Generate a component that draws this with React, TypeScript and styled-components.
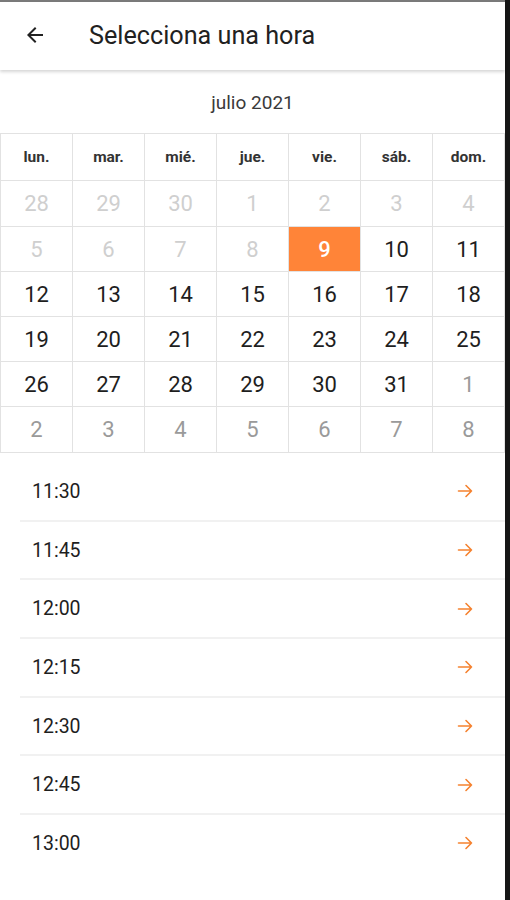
import React from "react";
import styled, { createGlobalStyle } from "styled-components";

const Global = createGlobalStyle`
  html, body { margin: 0; padding: 0; background: #ffffff; }
  body { font-family: Roboto, "Noto Sans", Arial, sans-serif; -webkit-font-smoothing: antialiased; }
`;

const Frame = styled.div`
  display: flex;
  width: 510px;
  height: 900px;
  overflow: hidden;
  background: #ffffff;
`;

const Screen = styled.div`
  width: 505px;
  display: flex;
  flex-direction: column;
  border-top: 2px solid #7a7a7a;
  box-sizing: border-box;
`;

const EdgeBar = styled.div`
  width: 5px;
  background: #161616;
`;

const Header = styled.header`
  height: 68px;
  display: flex;
  align-items: center;
  padding-left: 23px;
  padding-bottom: 2px;
  box-sizing: border-box;
  box-shadow: 0 2px 3px rgba(0, 0, 0, 0.16);
  position: relative;
  z-index: 1;
  background: #fff;
`;

const BackButton = styled.button`
  width: 24px;
  height: 24px;
  padding: 0;
  border: none;
  background: none;
  display: flex;
  color: #212121;
`;

const Title = styled.h1`
  margin: 0 0 0 42px;
  font-size: 25.2px;
  font-weight: 400;
  color: #212121;
`;

const MonthLabel = styled.div`
  height: 63px;
  display: flex;
  align-items: center;
  justify-content: center;
  font-size: 19px;
  color: #3a3a3a;
  padding-top: 2px;
  box-sizing: border-box;
`;

const Grid = styled.div`
  display: grid;
  grid-template-columns: repeat(7, 71px);
  grid-template-rows: 46px 45px 44px 44px 44px 44px 45px;
  gap: 1px;
  padding: 1px;
  background: #e2e2e2;
  width: 505px;
  box-sizing: border-box;
`;

const WeekDay = styled.div`
  background: #fff;
  display: flex;
  align-items: center;
  justify-content: center;
  font-size: 15.5px;
  font-weight: 700;
  color: #333;
`;

type Tone = "muted" | "other" | "normal" | "selected";

const toneColor: Record<Tone, string> = {
  muted: "#cfcfcf",
  other: "#9a9a9a",
  normal: "#1e1e1e",
  selected: "#ffffff",
};

const Day = styled.div<{ $tone: Tone }>`
  background: ${(p) => (p.$tone === "selected" ? "#ff8438" : "#fff")};
  color: ${(p) => toneColor[p.$tone]};
  font-weight: ${(p) => (p.$tone === "selected" ? 500 : 400)};
  display: flex;
  align-items: center;
  justify-content: center;
  font-size: 22px;
`;

const TimeList = styled.ul`
  list-style: none;
  margin: 0;
  padding: 10px 0 0 20px;
`;

const TimeRow = styled.li`
  height: 56.7px;
  display: flex;
  align-items: center;
  justify-content: space-between;
  padding: 0 32px 0 12px;
  border-bottom: 2px solid #f1f1f1;
  font-size: 19.5px;
  color: #1e1e1e;
  &:last-child { border-bottom-color: transparent; }
`;

const ArrowIcon = styled.svg`
  width: 16px;
  height: 14px;
  color: #f5822f;
`;

const weekDays = ["lun.", "mar.", "mié.", "jue.", "vie.", "sáb.", "dom."];

const days: { n: number; tone: Tone }[] = [
  ...[28, 29, 30, 1, 2, 3, 4, 5, 6, 7, 8].map((n) => ({ n, tone: "muted" as Tone })),
  { n: 9, tone: "selected" },
  ...Array.from({ length: 22 }, (_, i) => ({ n: 10 + i, tone: "normal" as Tone })),
  ...[1, 2, 3, 4, 5, 6, 7, 8].map((n) => ({ n, tone: "other" as Tone })),
];

const times = ["11:30", "11:45", "12:00", "12:15", "12:30", "12:45", "13:00"];

export default function App() {
  return (
    <Frame>
      <Global />
      <Screen>
        <Header>
          <BackButton aria-label="Atrás">
            <svg width="24" height="24" viewBox="0 0 24 24" fill="currentColor">
              <path d="M20 11H7.83l5.59-5.59L12 4l-8 8 8 8 1.41-1.41L7.83 13H20v-2z" />
            </svg>
          </BackButton>
          <Title>Selecciona una hora</Title>
        </Header>
        <MonthLabel>julio 2021</MonthLabel>
        <Grid>
          {weekDays.map((d) => (
            <WeekDay key={d}>{d}</WeekDay>
          ))}
          {days.map((d, i) => (
            <Day key={i} $tone={d.tone}>
              {d.n}
            </Day>
          ))}
        </Grid>
        <TimeList>
          {times.map((t) => (
            <TimeRow key={t}>
              <span>{t}</span>
              <ArrowIcon viewBox="0 0 16 14" fill="none" stroke="currentColor" strokeWidth="1.6" strokeLinecap="round" strokeLinejoin="round">
                <path d="M1.5 7h13M9 1.5L14.5 7 9 12.5" />
              </ArrowIcon>
            </TimeRow>
          ))}
        </TimeList>
      </Screen>
      <EdgeBar />
    </Frame>
  );
}
